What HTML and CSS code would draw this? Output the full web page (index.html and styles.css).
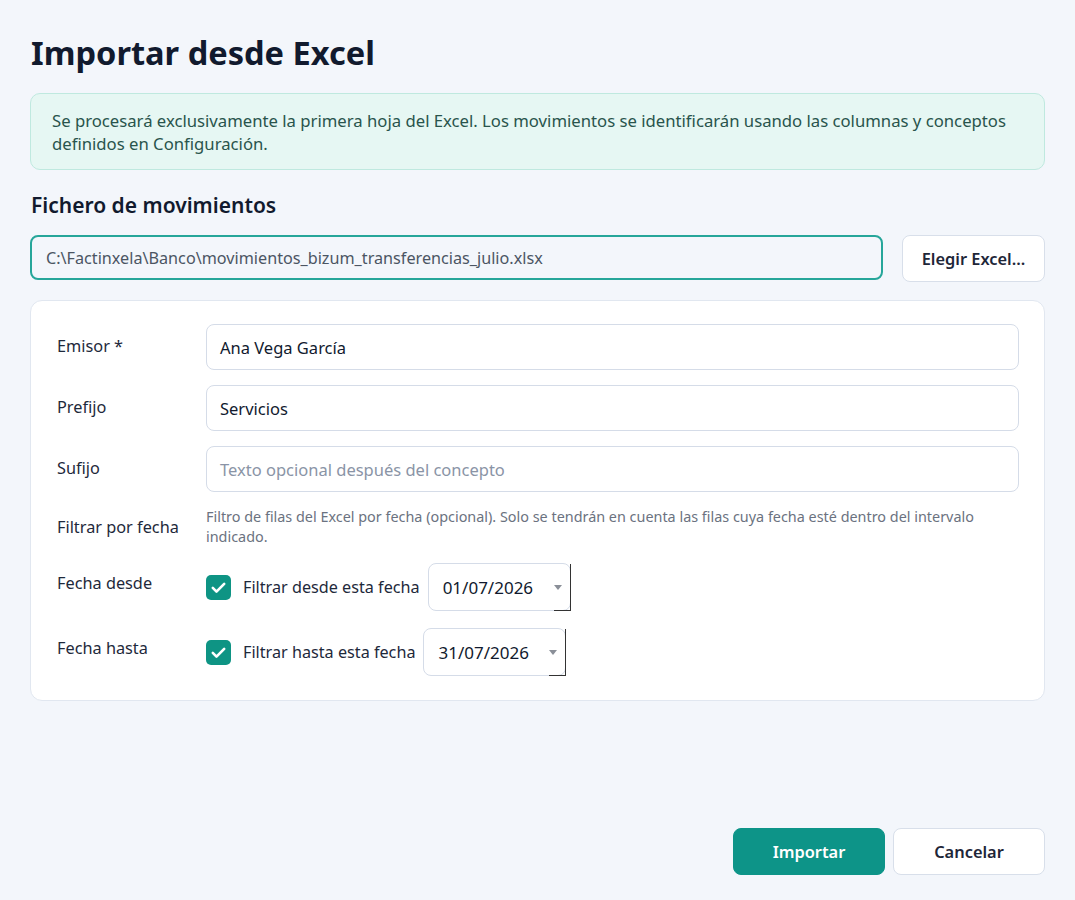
FILE: index.html
```html
<!DOCTYPE html>
<html lang="es">
  <head>
    <meta charset="UTF-8" />
    <meta name="viewport" content="width=device-width, initial-scale=1.0" />
    <title>Importar desde Excel</title>
    <link rel="stylesheet" href="styles.css">
  </head>
  <body>
    <div class="dialog">
      <h1 class="title">Importar desde Excel</h1>

      <div class="info-box">
        Se procesará exclusivamente la primera hoja del Excel. Los movimientos se identificarán usando las columnas y conceptos<br>
        definidos en Configuración.
      </div>

      <h2 class="section-title">Fichero de movimientos</h2>

      <div class="file-row">
        <div class="file-path">C:\Factinxela\Banco\movimientos_bizum_transferencias_julio.xlsx</div>
        <button class="btn btn-light btn-pick">Elegir Excel...</button>
      </div>

      <div class="form-card">
        <div class="form-row">
          <label class="form-label">Emisor *</label>
          <div class="text-input">Ana Vega García</div>
        </div>
        <div class="form-row">
          <label class="form-label">Prefijo</label>
          <div class="text-input">Servicios</div>
        </div>
        <div class="form-row">
          <label class="form-label">Sufijo</label>
          <div class="text-input placeholder">Texto opcional después del concepto</div>
        </div>
        <div class="form-row row-help">
          <label class="form-label">Filtrar por fecha</label>
          <div class="help-text">Filtro de filas del Excel por fecha (opcional). Solo se tendrán en cuenta las filas cuya fecha esté dentro del intervalo indicado.</div>
        </div>
        <div class="form-row row-date">
          <label class="form-label">Fecha desde</label>
          <div class="date-control">
            <span class="checkbox">
              <svg viewBox="0 0 24 24" width="21" height="21"><path d="M5.5 12.5l4.2 4.2L18.5 7.8" fill="none" stroke="#fff" stroke-width="3" stroke-linecap="round" stroke-linejoin="round"/></svg>
            </span>
            <span class="check-label">Filtrar desde esta fecha</span>
            <div class="date-picker">
              <span>01/07/2026</span>
              <span class="caret"></span>
            </div>
          </div>
        </div>
        <div class="form-row row-date">
          <label class="form-label">Fecha hasta</label>
          <div class="date-control">
            <span class="checkbox">
              <svg viewBox="0 0 24 24" width="21" height="21"><path d="M5.5 12.5l4.2 4.2L18.5 7.8" fill="none" stroke="#fff" stroke-width="3" stroke-linecap="round" stroke-linejoin="round"/></svg>
            </span>
            <span class="check-label">Filtrar hasta esta fecha</span>
            <div class="date-picker">
              <span>31/07/2026</span>
              <span class="caret"></span>
            </div>
          </div>
        </div>
      </div>

      <div class="actions">
        <button class="btn btn-primary">Importar</button>
        <button class="btn btn-light btn-cancel">Cancelar</button>
      </div>
    </div>
  </body>
</html>
```

FILE: styles.css
```css
* {
  box-sizing: border-box;
  font-family: "Noto Sans", "Open Sans", sans-serif;
}

html,
body {
  margin: 0;
  padding: 0;
  background: #f3f6fb;
  height: 100vh;
  overflow: hidden;
  color: #1e293b;
}

.dialog {
  display: flex;
  flex-direction: column;
  height: 100vh;
  padding: 30px 30px 25px 30px;
}

.title {
  margin: 0 0 0 1px;
  font-size: 32.6px;
  font-weight: 700;
  color: #111a2e;
  line-height: 46px;
}

.info-box {
  margin-top: 17px;
  background: #e6f7f3;
  border: 1px solid #bfe9df;
  border-radius: 10px;
  padding: 15px 21px 14px;
  font-size: 16.7px;
  line-height: 23px;
  color: #29544c;
  white-space: nowrap;
}

.section-title {
  margin: 20px 0 0 1px;
  font-size: 21px;
  font-weight: 600;
  line-height: 30px;
  color: #111a2e;
}

.file-row {
  display: flex;
  gap: 19px;
  margin-top: 15px;
  align-items: flex-start;
}

.file-path {
  flex: 1;
  height: 45px;
  border: 2px solid #26a69a;
  border-radius: 8px;
  padding: 0 14px;
  display: flex;
  align-items: center;
  font-size: 16.2px;
  color: #4b5563;
  background: #f3f6fb;
}

.btn {
  border-radius: 8px;
  font-size: 16.4px;
  font-weight: 600;
  cursor: pointer;
  height: 47px;
  padding: 0 12px;
}

.btn-light {
  background: #fff;
  border: 1px solid #d8dfea;
  color: #1e2638;
}

.btn-pick {
  width: 143px;
}

.btn-cancel {
  width: 152px;
}

.btn-primary {
  background: #0d9488;
  border: 1px solid #0d9488;
  color: #fff;
  width: 152px;
}

.form-card {
  margin-top: 18px;
  background: #fff;
  border: 1px solid #e1e7f0;
  border-radius: 12px;
  padding: 23px 25px 24px 26px;
  display: flex;
  flex-direction: column;
  gap: 15px;
}

.form-row {
  display: flex;
  align-items: flex-start;
}

.form-label {
  width: 149px;
  flex-shrink: 0;
  font-size: 16.3px;
  color: #1e293b;
  padding-top: 11px;
  line-height: 22px;
}

.text-input {
  flex: 1;
  height: 46px;
  border: 1px solid #d5dce8;
  border-radius: 8px;
  padding: 0 13px;
  display: flex;
  align-items: center;
  font-size: 16.5px;
  color: #111a2e;
  background: #fff;
}

.text-input.placeholder {
  color: #8a94a6;
}

.row-help {
  margin-top: -3px;
}

.row-help .form-label {
  padding-top: 12px;
}

.help-text {
  flex: 1;
  font-size: 14.4px;
  line-height: 20px;
  color: #6b7280;
  padding-top: 3px;
}

.row-date {
  margin-top: 1px;
}

.row-date + .row-date {
  margin-top: 2px;
}

.row-date .form-label {
  padding-top: 9px;
}

.date-control {
  display: flex;
  align-items: center;
  gap: 12px;
}

.checkbox {
  width: 25px;
  height: 25px;
  border-radius: 5px;
  background: #0e9484;
  display: flex;
  align-items: center;
  justify-content: center;
}

.check-label {
  font-size: 16.2px;
  color: #1e293b;
  margin-right: -4px;
}

.date-picker {
  position: relative;
  width: 143px;
  height: 48px;
  border: 1px solid #d5dce8;
  border-radius: 8px;
  display: flex;
  align-items: center;
  justify-content: space-between;
  padding: 0 8px 0 14px;
  font-size: 17px;
  color: #111a2e;
  background: #fff;
}

.date-picker::after {
  content: "";
  position: absolute;
  right: -1px;
  bottom: -1px;
  width: 16px;
  height: 46px;
  border-right: 1px solid #333;
  border-bottom: 1px solid #333;
}

.caret {
  width: 0;
  height: 0;
  border-left: 4px solid transparent;
  border-right: 4px solid transparent;
  border-top: 5px solid #8a8f98;
}

.actions {
  margin-top: auto;
  display: flex;
  justify-content: flex-end;
  gap: 8px;
}
```
